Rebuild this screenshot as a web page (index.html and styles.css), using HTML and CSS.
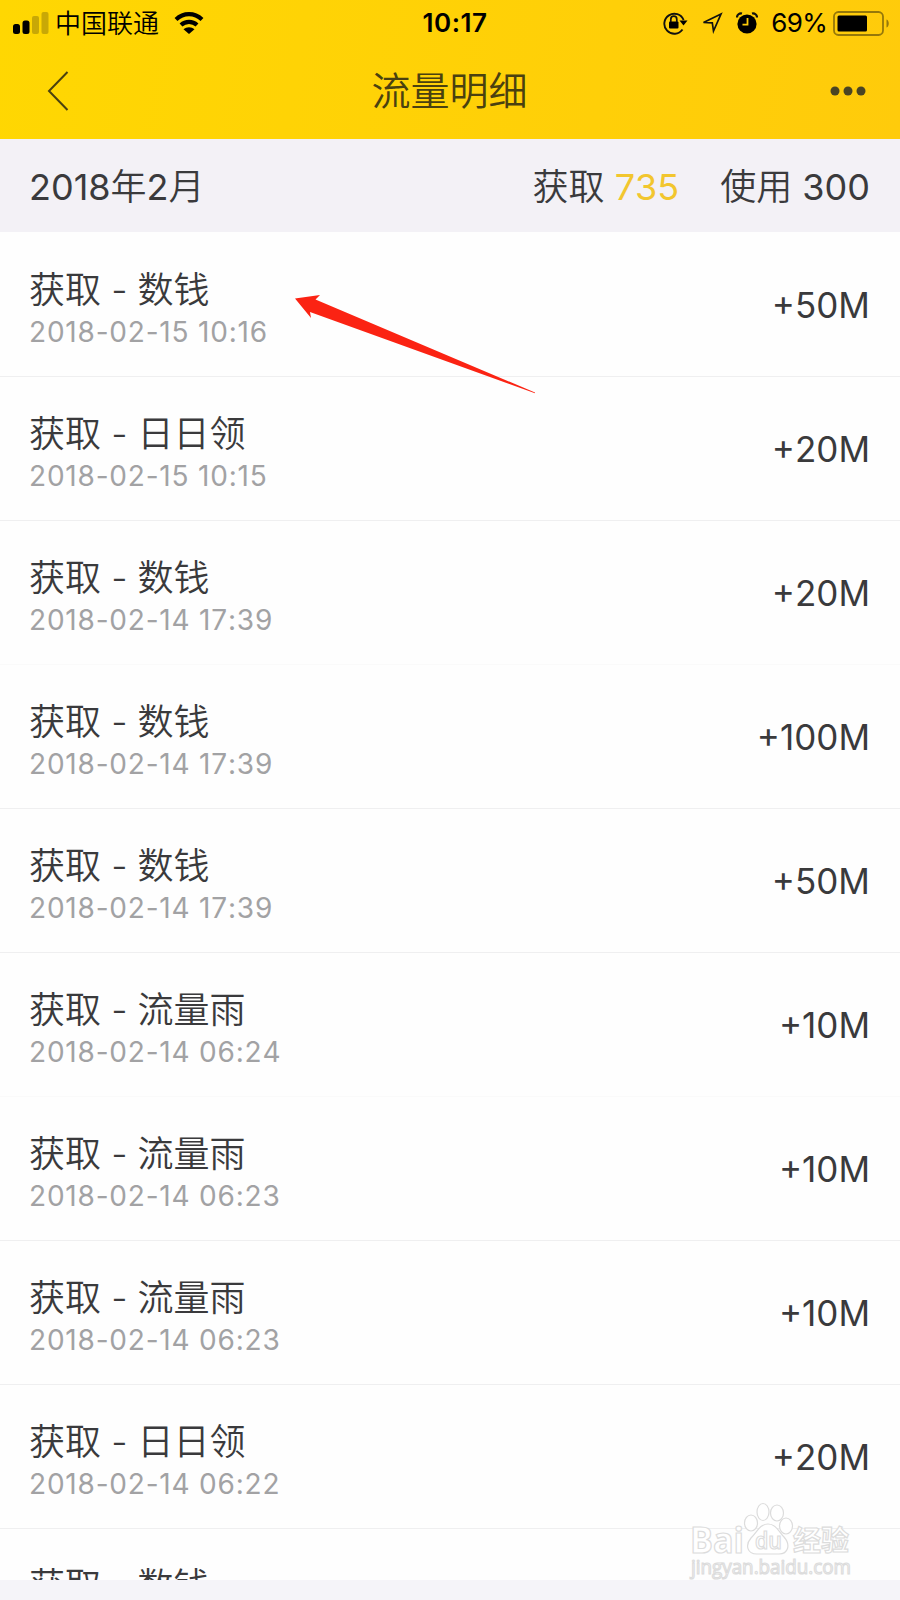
FILE: index.html
```html
<!DOCTYPE html>
<html lang="zh-CN">
<head>
  <meta charset="UTF-8" />
  <meta name="viewport" content="width=device-width, initial-scale=1.0"/>
  <title>流量明细</title>
  <link rel="stylesheet" href="styles.css">
</head>
<body>
  <header class="header">
    <div class="status-bar">
      <div class="status-left">
        <svg class="signal" width="36" height="22" viewBox="0 0 36 22">
          <rect x="0" y="12" width="7" height="10" rx="2.5"/>
          <rect x="9.5" y="8.5" width="7" height="13.5" rx="2.5"/>
          <rect class="dim" x="19" y="4" width="7" height="18" rx="2"/>
          <rect class="dim" x="28.5" y="0" width="7" height="22" rx="2"/>
        </svg>
        <span class="carrier">中国联通</span>
        <svg class="wifi" width="30" height="22" viewBox="0 0 30 22">
          <path d="M2 7.5C9.5 0.4 20.5 0.4 28 7.5M7 13C11.5 8.8 18.5 8.8 23 13" fill="none" stroke="#000" stroke-width="4.2"/>
          <path d="M9.5 17.3C12.5 14.5 17.5 14.5 20.5 17.3L15 22Z"/>
        </svg>
      </div>
      <span class="clock">10:17</span>
      <div class="status-right">
        <svg class="lock" width="26" height="24" viewBox="0 0 26 24">
          <path d="M20.5 18.5A10 10 0 1 1 21.6 9" fill="none" stroke="#111" stroke-width="1.9"/>
          <path d="M17.5 9.5H25.5L21.5 14.5Z"/>
          <rect x="7" y="10.5" width="9.5" height="7" rx="1"/>
          <path d="M8.8 11V8.5A3 3.3 0 0 1 14.8 8.5V11" fill="none" stroke="#111" stroke-width="1.7"/>
        </svg>
        <svg class="location" width="22" height="22" viewBox="0 0 22 22">
          <path d="M2.500 10.500L20 2L12.500 19L11.300 10.800Z" fill="none" stroke="#111" stroke-width="1.700"/>
        </svg>
        <svg class="alarm" width="22" height="22" viewBox="0 0 22 22">
          <circle cx="11" cy="12" r="9.600"/>
          <path d="M1 5.500A4 4 0 0 1 6 1.500M16 1.500A4 4 0 0 1 21 5.500" fill="none" stroke="#111" stroke-width="2.200"/>
          <path d="M11.500 6V12.700H6.500" fill="none" stroke="#ffcc0a" stroke-width="1.800"/>
        </svg>
        <span class="percent">69%</span>
        <svg class="battery" width="57" height="25" viewBox="0 0 57 25">
          <rect x="1" y="1" width="49" height="23" rx="4.500" fill="none" stroke="#95780a" stroke-width="1.800"/>
          <rect x="4.500" y="4.500" width="29.500" height="16" rx="1.500"/>
          <path d="M53.500 8.500C56.500 9.500 56.500 15.500 53.500 16.500Z" fill="#95780a"/>
        </svg>
      </div>
    </div>
    <nav class="nav">
      <svg class="back" width="22" height="42" viewBox="0 0 22 42">
        <path d="M20.500 2L2 21L20.500 40" fill="none" stroke="#4a4110" stroke-width="2"/>
      </svg>
      <h1>流量明细</h1>
      <svg class="more" width="36" height="10" viewBox="0 0 36 10">
        <circle cx="5" cy="5" r="4.500"/>
        <circle cx="18" cy="5" r="4.500"/>
        <circle cx="31" cy="5" r="4.500"/>
      </svg>
    </nav>
  </header>

  <section class="summary">
    <span class="month"><b>2018</b>年<b>2</b>月</span>
    <span class="gained">获取 <b class="yellow">735</b></span>
    <span class="used">使用 <b>300</b></span>
  </section>

  <main class="list">
    <div class="row">
      <div><p class="name">获取 - 数钱</p><p class="date">2018-02-15 10:16</p></div>
      <span class="amount">+50M</span>
    </div>
    <div class="row">
      <div><p class="name">获取 - 日日领</p><p class="date">2018-02-15 10:15</p></div>
      <span class="amount">+20M</span>
    </div>
    <div class="row faint">
      <div><p class="name">获取 - 数钱</p><p class="date">2018-02-14 17:39</p></div>
      <span class="amount">+20M</span>
    </div>
    <div class="row">
      <div><p class="name">获取 - 数钱</p><p class="date">2018-02-14 17:39</p></div>
      <span class="amount">+100M</span>
    </div>
    <div class="row">
      <div><p class="name">获取 - 数钱</p><p class="date">2018-02-14 17:39</p></div>
      <span class="amount">+50M</span>
    </div>
    <div class="row faint">
      <div><p class="name">获取 - 流量雨</p><p class="date">2018-02-14 06:24</p></div>
      <span class="amount">+10M</span>
    </div>
    <div class="row">
      <div><p class="name">获取 - 流量雨</p><p class="date">2018-02-14 06:23</p></div>
      <span class="amount">+10M</span>
    </div>
    <div class="row">
      <div><p class="name">获取 - 流量雨</p><p class="date">2018-02-14 06:23</p></div>
      <span class="amount">+10M</span>
    </div>
    <div class="row">
      <div><p class="name">获取 - 日日领</p><p class="date">2018-02-14 06:22</p></div>
      <span class="amount">+20M</span>
    </div>
    <div class="row">
      <div><p class="name">获取 - 数钱</p></div>
    </div>
  </main>

  <!-- pointer to the newest entry -->
  <svg class="arrow" width="244" height="102" viewBox="0 0 244 102">
    <path d="M0 3.500L25 0L20.500 4.500L240 97.500V98.300L15 17L16 23Z" fill="#fb2313"/>
  </svg>

  <svg class="watermark" width="170" height="84" viewBox="0 0 170 84">
    <g fill="#fff" stroke="#dcdcdc" stroke-width="1.200">
      <text class="brand" x="2" y="53" textLength="54" lengthAdjust="spacingAndGlyphs">Bai</text>
      <ellipse cx="63" cy="23" rx="6.500" ry="8"/>
      <ellipse cx="75" cy="12" rx="6" ry="8.500"/>
      <ellipse cx="89" cy="13" rx="6.500" ry="8"/>
      <ellipse cx="98" cy="26" rx="6.500" ry="8"/>
      <path d="M80 24C88 24 91 32 96 37C103 45 100 54 91 54C84 54 77 54 69 54C59 54 57 45 63 38C69 32 72 24 80 24Z"/>
      <text class="du" x="67" y="49" textLength="27" lengthAdjust="spacingAndGlyphs">du</text>
      <text class="cn" x="105" y="51" textLength="56" lengthAdjust="spacingAndGlyphs">经验</text>
      <text class="site" x="3" y="74" textLength="160" lengthAdjust="spacingAndGlyphs">jingyan.baidu.com</text>
    </g>
  </svg>
</body>
</html>
```
FILE: styles.css
```css
* {
  box-sizing: border-box;
}

body {
  margin: 0;
  position: relative;
  width: 900px;
  height: 1600px;
  overflow: hidden;
  font-family: Inter, "Noto Sans CJK SC", sans-serif;
  font-weight: 350;
  font-kerning: none;
  background: #f5f4f9;
  color: #3a3a3c;
}

svg {
  display: block;
  flex: none;
}

.header {
  height: 139px;
  background: linear-gradient(100deg, #ffd702, #ffcb0b);
}

.status-bar {
  display: grid;
  grid-template-columns: 1fr auto 1fr;
  align-items: center;
  height: 44px;
  padding: 0 10px 0 13px;
  color: #000;
}

.status-left,
.status-right {
  display: flex;
  align-items: center;
}

.status-right {
  justify-content: flex-end;
}

.dim {
  fill: #c8a806;
}

.carrier {
  margin: 1px 15px 0 6px;
  font-size: 26px;
  line-height: 44px;
}

.clock {
  margin-left: 7px;
  font-size: 26px;
  font-weight: 600;
  letter-spacing: 0.5px;
  line-height: 46px;
}

.location {
  margin-left: 13px;
}

.alarm {
  margin: 0 13px;
}

.percent {
  margin-right: 6px;
  font-size: 26px;
  font-weight: 400;
  letter-spacing: -0.7px;
  line-height: 46px;
}

.nav {
  display: flex;
  align-items: center;
  justify-content: space-between;
  height: 94px;
  padding: 0 34px 0 47px;
}

.nav h1 {
  margin: 0;
  font-size: 39px;
  font-weight: 350;
  line-height: 98px;
  color: #4a4110;
}

.more {
  fill: #4a4423;
}

.summary {
  display: flex;
  align-items: center;
  height: 93px;
  padding: 4px 30px 0 29px;
  background: #f3f1f6;
  font-size: 36px;
  line-height: 89px;
}

.summary b {
  font-weight: 400;
}

.summary .yellow {
  color: #f2c62e;
}

.gained {
  margin-left: auto;
}

.used {
  margin-left: 41px;
}

.list {
  height: 1348px;
  padding-top: 1px;
  overflow: hidden;
  background: #fefefe;
}

.row {
  display: flex;
  justify-content: space-between;
  height: 144px;
  padding: 36px 30px 0 29px;
  border-bottom: 1px solid #efeff0;
}

.faint {
  border-bottom-color: #fafafa;
}

.row p {
  margin: 0;
}

.name {
  font-size: 36px;
  line-height: 43px;
}

.date {
  font-size: 28px;
  font-weight: 400;
  letter-spacing: 0.8px;
  line-height: 40px;
  color: #a2a2a4;
}

.amount {
  font-size: 35px;
  font-weight: 400;
  line-height: 72px;
}

.arrow {
  position: absolute;
  left: 295px;
  top: 295px;
}

.watermark {
  position: absolute;
  left: 688px;
  top: 1500px;
}

.watermark text {
  font-family: "Open Sans", "Noto Sans CJK SC", sans-serif;
}

.brand {
  font-size: 35px;
  font-weight: 700;
}

.du {
  font-size: 23px;
  font-weight: 600;
}

.cn {
  font-size: 28px;
  font-weight: 700;
}

.site {
  font-size: 20px;
  font-weight: 400;
}
```
